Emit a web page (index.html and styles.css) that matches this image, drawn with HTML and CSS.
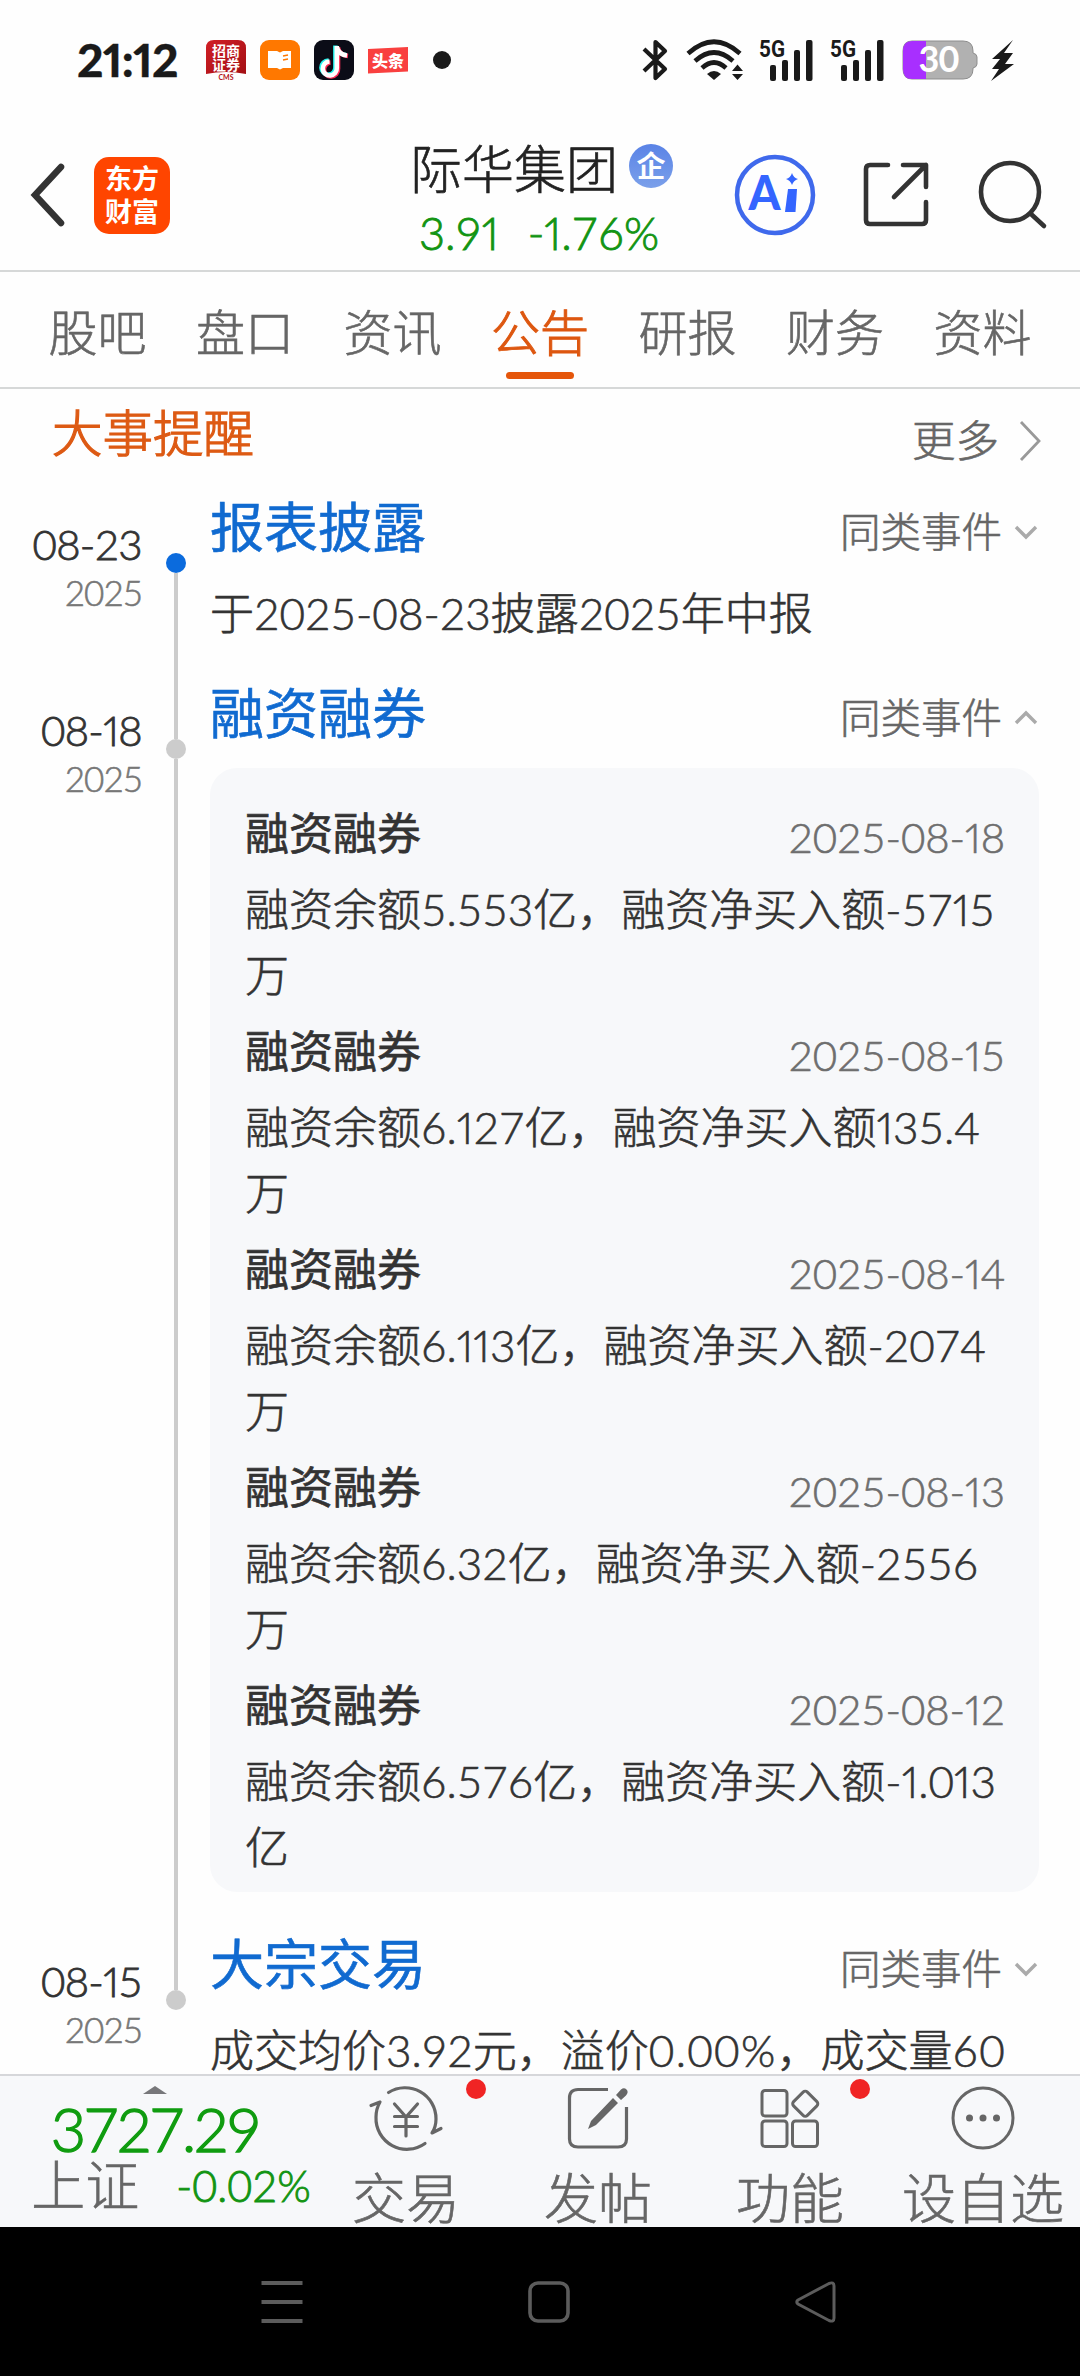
FILE: index.html
```html
<!DOCTYPE html>
<html lang="zh-CN">
<head>
<meta charset="utf-8">
<title>际华集团 公告</title>
<link rel="stylesheet" href="styles.css">
</head>
<body>
<header class="status">
  <span class="clock">21:12</span>
  <div class="apps">
    <svg width="42" height="42" viewBox="0 0 42 42">
      <defs><linearGradient id="cms" x1="0" y1="0" x2="1" y2="1"><stop offset="0" stop-color="#d11f26"/><stop offset="1" stop-color="#a30f14"/></linearGradient></defs>
      <path d="M1 35V9Q1 1 9 1H33Q41 1 41 9V35Q21 31 1 35Z" fill="url(#cms)"/>
      <text class="cms-text" x="21" y="17" text-anchor="middle">招商</text>
      <text class="cms-text" x="21" y="31" text-anchor="middle">证券</text>
      <text class="cms-foot" x="21" y="40.500" text-anchor="middle">CMS</text>
    </svg>
    <svg width="42" height="42" viewBox="0 0 42 42">
      <rect x="1" y="1" width="40" height="40" rx="9" fill="#ff7800"/>
      <path d="M9 12H18L21 13.500L24 12H32V29H24L21 30.500L18 29H9Z" fill="#fff"/>
      <path d="M24 17l5-1M24 21l5-1" stroke="#ff7800" stroke-width="1.600"/>
    </svg>
    <svg width="42" height="42" viewBox="0 0 42 42">
      <rect x="1" y="1" width="40" height="40" rx="9" fill="#0b0c17"/>
      <g fill="none" stroke-width="4.600">
        <path d="M22.400 6.500V28A7 7 0 1 1 15.500 21.500M22.400 7Q24 15 33 16" stroke="#25f4ee"/>
        <path d="M25 8V30A7 7 0 1 1 17.500 23.500M25 9Q26.500 16 35 17" stroke="#fe2c55"/>
        <path d="M23.800 7V29A7 7 0 1 1 16.500 22.500M23.800 8Q25.500 15.500 34 16.500" stroke="#fff"/>
      </g>
    </svg>
    <svg width="42" height="42" viewBox="0 0 42 42">
      <path d="M1 10L41 8V32.500L1 34.500Z" fill="#f9403f"/>
      <text class="toutiao" x="21" y="27.500" text-anchor="middle">头条</text>
    </svg>
    <i class="more-dot"></i>
  </div>
  <div class="signals">
    <svg width="28" height="44" viewBox="0 0 28 44"><path d="M3 11L24 31L14.500 40V4L24 13L3 33" fill="none" stroke="#1a1a1a" stroke-width="4.200" stroke-linejoin="round"/></svg>
    <svg class="wifi" width="58" height="44" viewBox="0 0 58 44">
      <g fill="none" stroke="#1a1a1a" stroke-width="4.600"><path d="M2 15.500Q28 -8 54 15.500"/><path d="M9 23Q28 6 47 23"/><path d="M16 30Q28 19 40 30"/></g>
      <path d="M21 36Q28 30 35 36L28 42Z" fill="#1a1a1a"/><path d="M46 33l5.500-6.500L57 33ZM46 36h11l-5.500 6Z" fill="#1a1a1a"/>
    </svg>
    <svg class="cell" width="56" height="44" viewBox="0 0 56 44"><text class="net" x="0" y="19" textLength="26" lengthAdjust="spacingAndGlyphs">5G</text><g fill="#1a1a1a"><rect x="11" y="27" width="6" height="16" rx="2"/><rect x="23" y="22" width="6" height="21" rx="2"/><rect x="35" y="12" width="6" height="31" rx="2"/><rect x="47" y="2" width="6.500" height="41" rx="2"/></g></svg>
    <svg class="cell" width="56" height="44" viewBox="0 0 56 44"><text class="net" x="0" y="19" textLength="26" lengthAdjust="spacingAndGlyphs">5G</text><g fill="#1a1a1a"><rect x="11" y="27" width="6" height="16" rx="2"/><rect x="23" y="22" width="6" height="21" rx="2"/><rect x="35" y="12" width="6" height="31" rx="2"/><rect x="47" y="2" width="6.500" height="41" rx="2"/></g></svg>
    <svg class="battery" width="76" height="44" viewBox="0 0 76 44">
      <path d="M10 3H61Q71 3 71 13V15Q75 16 75 19V26Q75 29 71 30V31Q71 41 61 41H10Q1 41 1 31V13Q1 3 10 3Z" fill="#b1b1b1" stroke="#8d8d8d" stroke-width="1"/>
      <path d="M24 3H10Q1 3 1 13V31Q1 41 10 41H24Z" fill="#a82fff"/>
      <text class="level" x="37" y="34" text-anchor="middle" textLength="41">30</text>
    </svg>
    <svg class="bolt" width="25" height="44" viewBox="0 0 25 44"><path d="M23 2L2 21H10L2 31H9L1 43L24 26H15L23 15H14Z" fill="#1a1a1a"/></svg>
  </div>
</header>

<section class="topbar">
  <svg class="back" width="34" height="66" viewBox="0 0 34 66"><path d="M30 5L4 33L30 61" fill="none" stroke="#333" stroke-width="6.500" stroke-linecap="round"/></svg>
  <div class="brand"><span>东方</span><span>财富</span></div>
  <div class="stock">
    <div class="stock-name"><span>际华集团</span><i class="badge">企</i></div>
    <div class="quote"><span>3.9<span class="n">1</span></span><span>-<span class="n">1</span>.76%</span></div>
  </div>
  <div class="tools">
    <svg width="82" height="82" viewBox="0 0 82 82"><circle cx="41" cy="41" r="38" fill="none" stroke="#3f69ec" stroke-width="4.500"/><text class="ai" x="14.500" y="56" textLength="32" lengthAdjust="spacingAndGlyphs">A</text><path d="M54 35H63L61.500 58H51Z" fill="#3465ff"/><path d="M58 19q1.500 5 6 6q-4.500 1.500-6 6q-1.500-4.500-6-6q4.500-1 6-6Z" fill="#3465ff"/></svg>
    <svg class="share" width="68" height="68" viewBox="0 0 68 68"><g fill="none" stroke="#333" stroke-width="4.600" stroke-linecap="round" stroke-linejoin="round"><path d="M26 4H8Q4 4 4 8V59Q4 63 8 63H60Q64 63 64 59V41"/><path d="M41 4H64V26M64 4L32 36"/></g></svg>
    <svg class="search" width="72" height="68" viewBox="0 0 72 68"><g fill="none" stroke="#333" stroke-width="4.600" stroke-linecap="round"><circle cx="33" cy="31" r="29"/><path d="M54 53L67 65"/></g></svg>
  </div>
</section>

<nav class="tabs">
  <a>股吧</a><a>盘口</a><a>资讯</a><a class="on">公告</a><a>研报</a><a>财务</a><a>资料</a>
</nav>

<main class="feed">
  <div class="feed-head">
    <h2>大事提醒</h2>
    <span class="more">更多<svg width="22" height="44" viewBox="0 0 22 44"><path d="M2 3L20 22L2 41" fill="none" stroke="#999" stroke-width="2.800"/></svg></span>
  </div>

  <article class="event first">
    <div class="when"><b>08-23</b><span>2025</span></div>
    <div class="rail"><i></i></div>
    <div class="what">
      <div class="row"><h3>报表披露</h3><span class="same">同类事件<svg width="24" height="16" viewBox="0 0 24 16"><path d="M2 3L12 13L22 3" fill="none" stroke="#aaa" stroke-width="3.400"/></svg></span></div>
      <p>于2025-08-23披露2025年中报</p>
    </div>
  </article>

  <article class="event open">
    <div class="when"><b>08-<span class="n">1</span>8</b><span>2025</span></div>
    <div class="rail"><i></i></div>
    <div class="what">
      <div class="row"><h3>融资融券</h3><span class="same">同类事件<svg width="24" height="16" viewBox="0 0 24 16"><path d="M2 13L12 3L22 13" fill="none" stroke="#aaa" stroke-width="3.400"/></svg></span></div>
      <div class="card">
        <div class="item"><div class="item-head"><h4>融资融券</h4><time>2025-08-<span class="n">1</span>8</time></div><p>融资余额5.553亿，融资净买入额-57<span class="n">1</span>5<br>万</p></div>
        <div class="item"><div class="item-head"><h4>融资融券</h4><time>2025-08-<span class="n">1</span>5</time></div><p>融资余额6.<span class="n">1</span>27亿，融资净买入额<span class="n">1</span>35.4<br>万</p></div>
        <div class="item"><div class="item-head"><h4>融资融券</h4><time>2025-08-<span class="n">1</span>4</time></div><p>融资余额6.<span class="n">11</span>3亿，融资净买入额-2074<br>万</p></div>
        <div class="item"><div class="item-head"><h4>融资融券</h4><time>2025-08-<span class="n">1</span>3</time></div><p>融资余额6.32亿，融资净买入额-2556<br>万</p></div>
        <div class="item"><div class="item-head"><h4>融资融券</h4><time>2025-08-<span class="n">1</span>2</time></div><p>融资余额6.576亿，融资净买入额-<span class="n">1</span>.0<span class="n">1</span>3<br>亿</p></div>
      </div>
    </div>
  </article>

  <article class="event last">
    <div class="when"><b>08-<span class="n">1</span>5</b><span>2025</span></div>
    <div class="rail"><i></i></div>
    <div class="what">
      <div class="row"><h3>大宗交易</h3><span class="same">同类事件<svg width="24" height="16" viewBox="0 0 24 16"><path d="M2 3L12 13L22 3" fill="none" stroke="#aaa" stroke-width="3.400"/></svg></span></div>
      <p>成交均价3.92元，溢价<span class="wide">0.00%</span>，成交量<span class="wide">60</span></p>
    </div>
  </article>
</main>

<footer class="dock">
  <div class="index">
    <svg width="24" height="9" viewBox="0 0 24 9"><path d="M0 9L12 1L24 9Z" fill="#77777a"/></svg>
    <strong>3727.29</strong>
    <div class="index-row"><span>上证</span><em>-0.02%</em></div>
  </div>
  <div class="action">
    <svg width="76" height="68" viewBox="0 0 76 68"><g fill="none" stroke="#666" stroke-width="3.200" stroke-linecap="round" stroke-linejoin="round"><path d="M20.500 8.500A31 31 0 0 1 68 35Q68 43 64 49L73 44.500"/><path d="M57 59.500A31 31 0 0 1 8 33Q8 25 12 18L3 21.500"/><path d="M26.500 20L38 33L49.500 20M26.500 32.500H49.500M26.500 42.500H49.500M38 33V52"/></g></svg>
    <span>交易</span><i class="dot"></i>
  </div>
  <div class="action">
    <svg width="68" height="68" viewBox="0 0 68 68"><path d="M44 5.500H14Q5.500 5.500 5.500 14V55Q5.500 63 14 63H54Q62.500 63 62.500 55V23" fill="none" stroke="#666" stroke-width="3.200"/><path d="M24 45L27 37L49 14L54 19L32 41ZM52 11L57 5.500Q60 3 62.500 5.500Q65 8 62 11.500L57 16Z" fill="#666"/></svg>
    <span>发帖</span>
  </div>
  <div class="action">
    <svg width="68" height="68" viewBox="0 0 68 68"><g fill="none" stroke="#666" stroke-width="3"><rect x="6" y="6.500" width="25" height="25.500" rx="3"/><rect x="6" y="37" width="25" height="25.500" rx="3"/><rect x="36.500" y="37" width="25" height="25.500" rx="3"/><rect x="39.500" y="10" width="19.500" height="19.500" rx="3" transform="rotate(45 49.250 19.750)"/></g></svg>
    <span>功能</span><i class="dot"></i>
  </div>
  <div class="action">
    <svg width="68" height="68" viewBox="0 0 68 68"><circle cx="34" cy="34" r="30" fill="none" stroke="#666" stroke-width="3"/><g fill="#666"><circle cx="20.500" cy="34" r="3.500"/><circle cx="34" cy="34" r="3.500"/><circle cx="47.500" cy="34" r="3.500"/></g></svg>
    <span>设自选</span>
  </div>
</footer>

<div class="sysnav">
  <svg width="44" height="44" viewBox="0 0 44 44"><path d="M1.500 3H42.500M1.500 22H42.500M1.500 41H42.500" stroke="#5c5c5c" stroke-width="4"/></svg>
  <svg width="44" height="44" viewBox="0 0 44 44"><rect x="3" y="3" width="38" height="38" rx="8" fill="none" stroke="#5c5c5c" stroke-width="3.600"/></svg>
  <svg width="44" height="44" viewBox="0 0 44 44"><path d="M4 20L35 3.500Q40 1.500 40 6V38Q40 42.500 35 40.500L4 24Q1.500 22 4 20Z" fill="none" stroke="#5c5c5c" stroke-width="3"/></svg>
</div>
</body>
</html>
```
FILE: styles.css
```css
* { box-sizing: border-box; margin: 0; padding: 0; }
body {
  width: 1080px; height: 2376px; overflow: hidden;
  display: flex; flex-direction: column;
  background: #fefefe; color: #333;
  font-family: Lato, "Noto Sans CJK SC", sans-serif;
  font-weight: 300;
  -webkit-text-stroke-width: .6px;
}
svg { display: block; flex: none; overflow: visible; }
svg text { -webkit-text-stroke-width: 0; }
i, em { font-style: normal; }
h2, h3, h4, b, strong { font-weight: inherit; }
/* narrow figure one */
.n { font-variant-numeric: proportional-nums; }
.wide { letter-spacing: 1.300px; }

/* Status bar */
.status { height: 120px; flex: none; display: flex; align-items: center; padding: 0 65px 0 77px; color: #1a1a1a; }
.clock { width: 128px; font-size: 46px; line-height: 60px; font-weight: 900; letter-spacing: -.5px; -webkit-text-stroke-width: .3px; white-space: nowrap; font-variant-numeric: proportional-nums; }
.apps { display: flex; align-items: center; gap: 12px; }
.cms-text { font-size: 14px; font-weight: 700; fill: #fff; }
.cms-foot { font-size: 7px; font-weight: 700; fill: #b31217; }
.toutiao { font-size: 16px; font-weight: 900; fill: #fff; }
.more-dot { width: 18px; height: 18px; border-radius: 50%; background: #1a1a1a; margin-left: 12px; }
.signals { margin-left: auto; display: flex; align-items: center; }
.wifi { margin-left: 17px; }
.cell { margin-left: 15px; }
.net { font: 700 24px Roboto, sans-serif; fill: #1a1a1a; }
.battery { margin-left: 16px; }
.level { font: 700 36px Lato, sans-serif; fill: #fff; }
.bolt { margin-left: 12px; }

/* Stock header */
.topbar { height: 152px; flex: none; display: flex; align-items: center; padding: 0 31px 0 31px; border-bottom: 2px solid #d6d8d8; }
.brand { width: 76px; height: 77px; margin-left: 29px; border-radius: 15px; background: #ff4500; color: #fff; display: flex; flex-direction: column; align-items: center; justify-content: center; font-size: 27px; line-height: 33px; font-weight: 700; -webkit-text-stroke-width: 0; }
.stock { margin-left: 240px; width: 264px; padding-top: 11px; }
.stock-name { display: flex; align-items: center; gap: 11px; height: 64px; font-size: 52px; white-space: nowrap; color: #222; }
.badge { width: 44px; height: 44px; border-radius: 50%; background: linear-gradient(#5a83e6, #7ba0ea); color: #fff; font-size: 29px; line-height: 43px; font-weight: 700; text-align: center; -webkit-text-stroke-width: 0; }
.quote { display: flex; gap: 29px; padding-left: 9px; height: 69px; align-items: center; font-size: 45px; color: #129412; -webkit-text-stroke-width: .9px; white-space: nowrap; }
.tools { margin-left: 60px; display: flex; align-items: center; }
.ai { font: 900 47px Lato, sans-serif; fill: #3465ff; }
.share { margin-left: 46px; }
.search { margin-left: 47px; }

/* Tabs */
.tabs { height: 117px; flex: none; display: grid; grid-template-columns: repeat(7, 147.500px); justify-content: center; border-bottom: 2px solid #d6d8d8; font-size: 49px; line-height: 120px; color: #666; text-align: center; }
.on { color: #dd5710; display: flex; flex-direction: column; align-items: center; -webkit-text-stroke-width: 1px; }
.on::after { content: ""; width: 68px; height: 7px; border-radius: 4px; background: #e5560b; margin-top: -20px; flex: none; }

/* Event feed */
.feed { height: 1685px; flex: none; overflow: hidden; }
.feed-head { height: 99px; display: flex; justify-content: space-between; padding: 0 39px 0 52px; }
.feed-head h2 { font-size: 50.500px; line-height: 88px; color: #dd5a14; -webkit-text-stroke-width: 1.200px; }
.more { display: flex; align-items: center; height: 99px; gap: 20px; font-size: 43.500px; color: #666; }
.more svg { margin-top: 5px; }
.event { display: grid; grid-template-columns: 142px 68px 829px; }
.when { text-align: right; padding-top: 32px; white-space: nowrap; }
.when b { display: block; font-size: 42px; line-height: 48px; letter-spacing: -.7px; -webkit-text-stroke-width: .8px; }
.when > span { display: block; font-size: 35px; line-height: 48px; letter-spacing: -1px; color: #777; }
.rail { display: flex; flex-direction: column; align-items: center; }
.rail i { width: 20px; height: 20px; border-radius: 50%; background: #ccc; flex: none; }
.rail::before, .rail::after { content: ""; width: 4px; background: #ccc; }
.rail::before { height: 65px; }
.rail::after { flex: 1; }
.first .rail::before, .last .rail::after { background: none; }
.first .rail i { background: #0b6bdd; }
.row { display: flex; justify-content: space-between; height: 80px; padding-right: 1px; }
.row h3 { font-size: 54px; line-height: 80px; font-weight: 400; color: #106ad0; -webkit-text-stroke-width: .6px; }
.same { display: flex; align-items: center; gap: 12px; height: 82px; font-size: 40.500px; color: #666; }
.same svg { margin-top: 5px; }
.event p { font-size: 44px; line-height: 66px; white-space: nowrap; }
.what > p { margin: 12px 0 28px; }
.card { margin: 14px 0 33px; padding: 28px 34px 0 35px; height: 1124px; border-radius: 27px; background: #f7f8fa; }
.item { height: 218px; }
.item-head { display: flex; justify-content: space-between; height: 80px; }
.item h4 { font-size: 44px; line-height: 74px; font-weight: 400; -webkit-text-stroke-width: .7px; }
.item time { font-size: 42px; line-height: 82px; letter-spacing: -.1px; color: #6e6e6e; }

/* Bottom bar */
.dock { height: 153px; flex: none; display: grid; grid-template-columns: 310px 192px 192px 192px 194px; border-top: 2px solid #d6d7da; background: #f7f8fa; color: #666; }
.index { padding-top: 9px; display: flex; flex-direction: column; align-items: center; white-space: nowrap; }
.index strong { font-size: 61px; line-height: 62px; margin-top: 4px; color: #109c10; letter-spacing: -2.600px; -webkit-text-stroke-width: 1.400px; }
.index-row { display: flex; align-items: center; gap: 37px; font-size: 54px; line-height: 56px; margin: -2px 0 0 32px; }
.index-row em { font-size: 43px; color: #129412; -webkit-text-stroke-width: .9px; }
.action { position: relative; display: flex; flex-direction: column; align-items: center; padding-top: 8px; font-size: 54px; line-height: 80px; white-space: nowrap; }
.action span { margin-top: 7px; height: 60px; }
.dot { position: absolute; left: 156px; top: 3px; width: 20px; height: 20px; border-radius: 50%; background: #f02424; }

/* System navigation */
.sysnav { height: 149px; flex: none; background: #000; display: flex; justify-content: center; align-items: center; gap: 223px; padding-left: 18px; }
```
